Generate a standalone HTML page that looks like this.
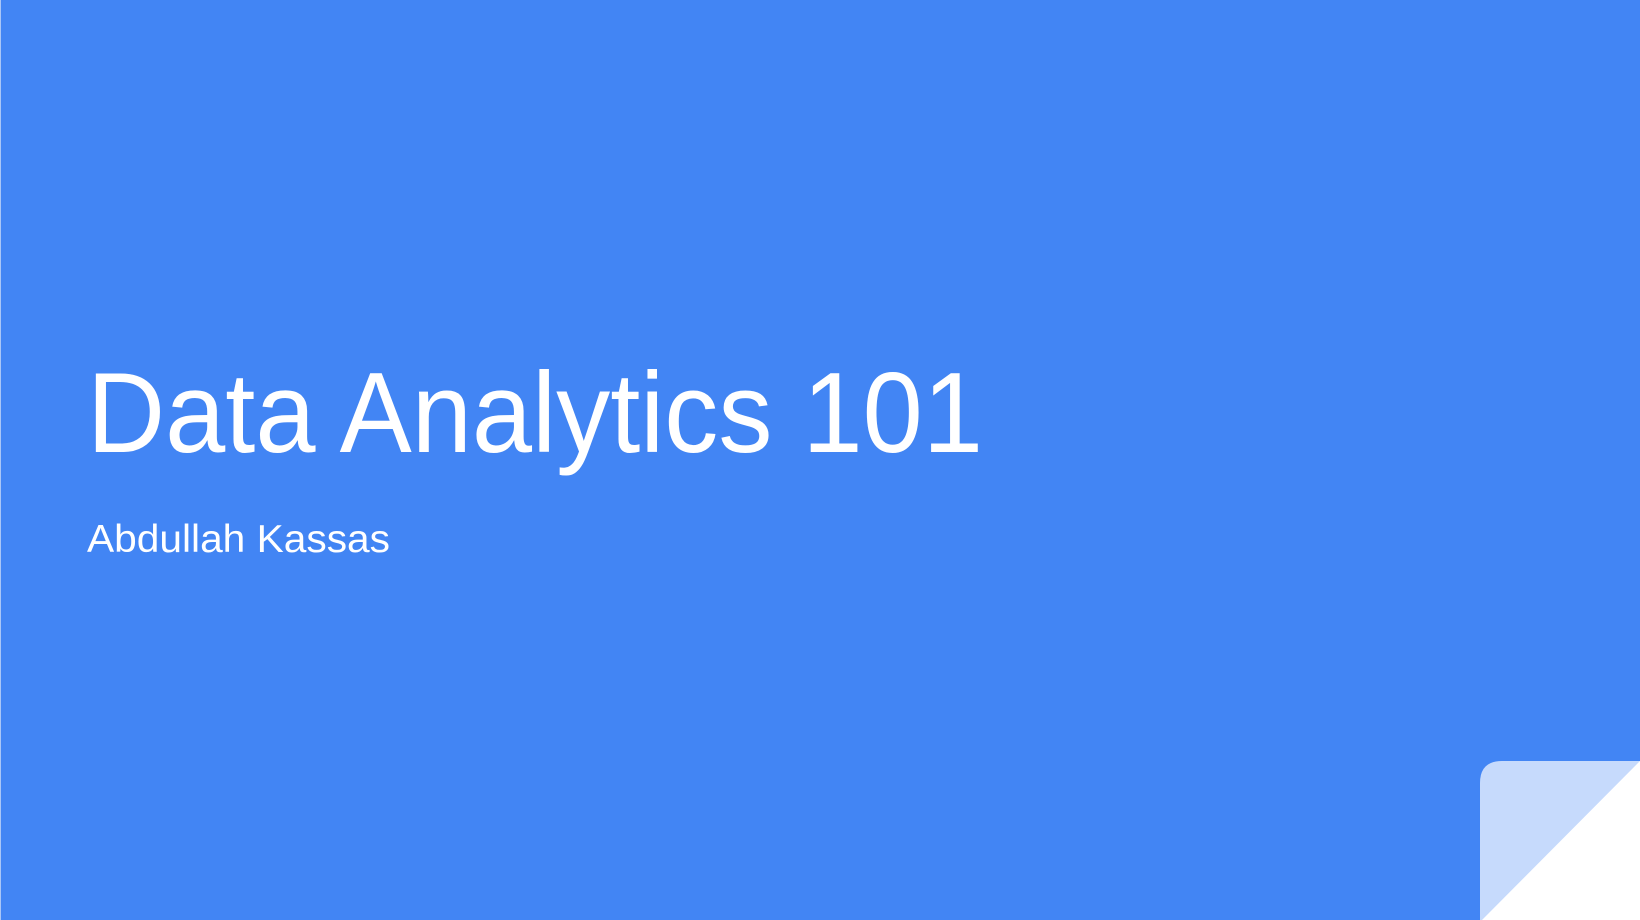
<!DOCTYPE html>
<html><head><meta charset="utf-8"><style>
html,body{margin:0;padding:0;width:1640px;height:920px;overflow:hidden;background:#4285f4}
svg{position:absolute;left:0;top:0}
</style></head><body>
<svg width="1640" height="920" viewBox="0 0 1640 920" xmlns="http://www.w3.org/2000/svg">
<rect x="0" y="0" width="1640" height="920" fill="#4285f4"/>
<rect x="0" y="0" width="1" height="920" fill="#a9c6f7"/>
<path d="M1480 920 L1480 783 Q1480 761 1502 761 L1640 761 L1640 920 Z" fill="#c6dafc"/>
<path d="M1640 761 L1640 920 L1482 920 Z" fill="#ffffff"/>
<text x="87" y="452" font-family="Liberation Sans, Arial, sans-serif" font-size="114" fill="#ffffff" textLength="896" lengthAdjust="spacingAndGlyphs">Data Analytics 101</text>
<text x="87" y="552" font-family="Liberation Sans, Arial, sans-serif" font-size="39" fill="#ffffff" textLength="303" lengthAdjust="spacingAndGlyphs">Abdullah Kassas</text>
</svg>
</body></html>
